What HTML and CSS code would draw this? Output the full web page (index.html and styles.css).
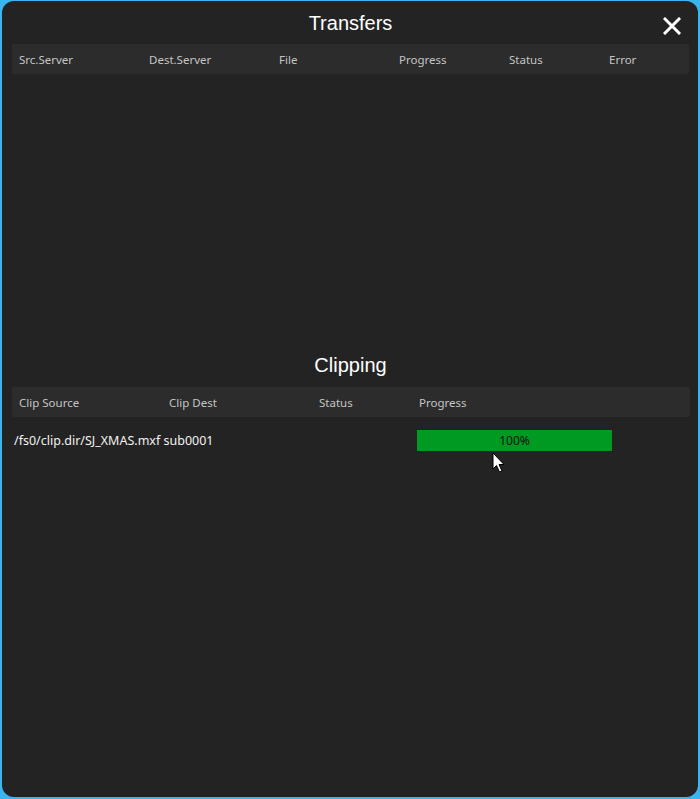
FILE: index.html
```html
<!DOCTYPE html>
<html>
<head>
<meta charset="utf-8">
<link rel="stylesheet" href="styles.css">
</head>
<body>
<div class="window">
  <div class="title-bar">
    <h1 class="title">Transfers</h1>
    <button class="close" aria-label="Close">
      <svg width="18" height="18" viewBox="0 0 18 18"><path d="M2 2 L16 16 M16 2 L2 16" stroke="#fff" stroke-width="3" stroke-linecap="square"/></svg>
    </button>
  </div>
  <div class="table transfers">
    <div class="thead">
      <span class="c130">Src.Server</span>
      <span class="c130">Dest.Server</span>
      <span class="c120">File</span>
      <span class="c110">Progress</span>
      <span class="c100">Status</span>
      <span class="cfill">Error</span>
    </div>
    <div class="tbody-empty"></div>
  </div>
  <h2 class="section-title">Clipping</h2>
  <div class="table clipping">
    <div class="thead">
      <span class="c150">Clip Source</span>
      <span class="c150">Clip Dest</span>
      <span class="c100">Status</span>
      <span class="cfill">Progress</span>
    </div>
    <div class="row">
      <span class="path">/fs0/clip.dir/SJ_XMAS.mxf sub0001</span>
      <div class="bar"><div class="bar-fill" style="width:100%"></div><span class="bar-text">100%</span></div>
    </div>
  </div>
  <svg class="cursor" width="14" height="22" viewBox="0 0 14 22"><path d="M1 1 L1 17 L4.5 13.5 L7.5 20 L10 19 L7 12.5 L12 12.5 Z" fill="#fff" stroke="#000" stroke-width="1"/></svg>
</div>
</body>
</html>
```
FILE: styles.css
```css
html, body {
  margin: 0;
  padding: 0;
  background: #3ab5f0;
  width: 700px;
  height: 799px;
  overflow: hidden;
}
.window {
  position: relative;
  box-sizing: border-box;
  margin: 1px 2px 0 2px;
  height: 796px;
  background: #232323;
  border-radius: 12px;
  padding: 0 9px 0 10px;
  font-family: "Noto Sans", "Open Sans", sans-serif;
}
.title-bar {
  height: 43px;
  display: flex;
  align-items: center;
  justify-content: center;
  position: relative;
}
.title, .section-title {
  margin: 0;
  font-family: "Liberation Sans", Arial, sans-serif;
  font-weight: normal;
  font-size: 20px;
  color: #fff;
  text-align: center;
}
.title { margin-top: 1px; }
.close {
  position: absolute;
  right: 8px;
  top: 16px;
  background: none;
  border: 0;
  padding: 0;
  width: 18px;
  height: 18px;
  line-height: 0;
}
.thead {
  display: flex;
  height: 30px;
  align-items: center;
  background: #2c2c2c;
  color: #c4c4c4;
  font-size: 11.5px;
  border-radius: 2px;
}
.thead span {
  box-sizing: border-box;
  padding-left: 7px;
}
.c150 { width: 150px; }
.c130 { width: 130px; }
.c120 { width: 120px; }
.c110 { width: 110px; }
.c100 { width: 100px; }
.cfill { flex: 1; }
.tbody-empty { height: 270px; }
.section-title {
  height: 43px;
  line-height: 43px;
}
.clipping .thead { margin-right: -1px; }
.row {
  display: flex;
  align-items: center;
  height: 21px;
  margin-top: 13px;
}
.path {
  width: 403px;
  padding-left: 2px;
  color: #f2f2f2;
  font-size: 12.5px;
}
.bar {
  position: relative;
  width: 195px;
  height: 21px;
  background: #1b3a1f;
}
.bar-fill {
  height: 100%;
  background: #009a22;
}
.bar-text {
  position: absolute;
  inset: 0;
  text-align: center;
  line-height: 21px;
  font-size: 12px;
  color: #111;
}
.cursor {
  position: absolute;
  left: 490px;
  top: 451px;
}
```
